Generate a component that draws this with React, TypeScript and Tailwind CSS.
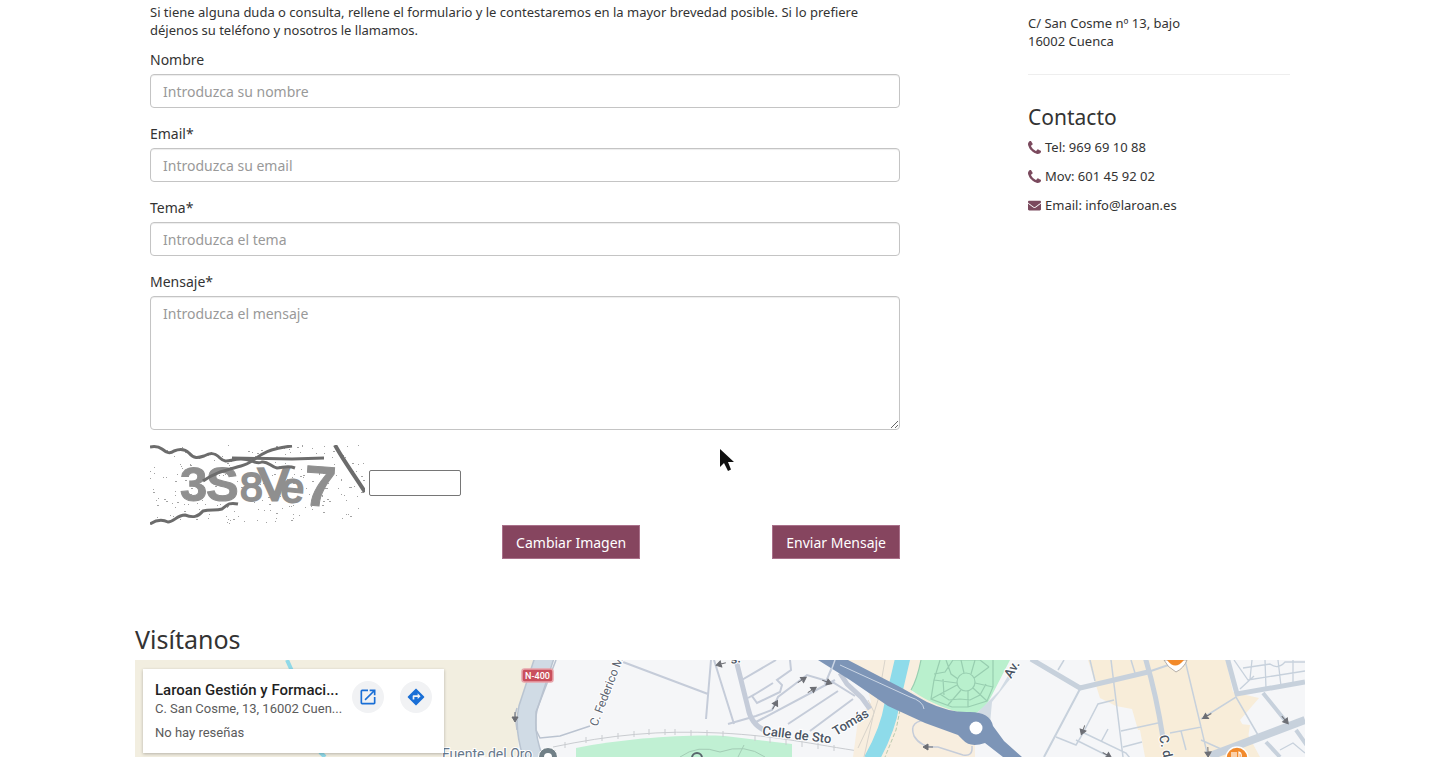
import React from "react";
import { FaEnvelope } from "react-icons/fa";

const accent = "#7b4a5e";

function PhoneIcon() {
  return (
    <svg width="13" height="13" viewBox="0 0 1408 1408" fill={accent} aria-hidden="true">
      <path d="M1408 1112q0 27-10 70.500t-21 68.500q-21 50-122 106-94 51-186 51-27 0-52.500-3.500t-57.500-12.500-47.500-14.500-55.500-20.500-49-18q-98-35-175-83-128-79-264.500-215.500t-215.500-264.500q-48-77-83-175-3-9-18-49t-20.500-55.500-14.500-47.500-12.500-57.500-3.500-52.500q0-92 51-186 56-101 106-122 25-11 68.500-21t70.500-10q14 0 21 3 18 6 53 76 11 19 30 54t35 63.500 31 53.500q3 4 17.500 25t21.500 35.500 7 28.500q0 20-28.500 50t-62 55-62 53-28.500 46q0 9 5 22.500t8.500 20.500 14 24 11.500 19q76 137 174 235t235 174q2 1 19 11.500t24 14 20.500 8.500 22.500 5q18 0 46-28.500t53-62 55-62 50-28.500q14 0 28.500 7t35.500 21.500 25 17.500q25 15 53.500 31t63.500 35 54 30q70 35 76 53 3 7 3 21z" />
    </svg>
  );
}

function Field({ id, label, placeholder, type = "text" }: { id: string; label: string; placeholder: string; type?: string }) {
  return (
    <div className="mb-[15px]">
      <label htmlFor={id} className="mb-[3px] block text-[14px] leading-[22px]">{label}</label>
      <input
        id={id}
        type={type}
        placeholder={placeholder}
        className="block h-[34px] w-full rounded border border-[#c4c4c4] bg-white px-3 text-[14px] shadow-[inset_0_1px_1px_rgba(0,0,0,0.075)] outline-none placeholder:text-[#999]"
      />
    </div>
  );
}

function captchaSpecks() {
  const specks: { x: number; y: number; w: number; h: number }[] = [];
  let seed = 71;
  const next = () => {
    seed = (seed * 16807) % 2147483647;
    return seed / 2147483647;
  };
  for (let i = 0; i < 230; i++) {
    specks.push({ x: Math.floor(next() * 214), y: Math.floor(next() * 79), w: next() > 0.7 ? 2 : 1, h: 1 });
  }
  return specks;
}

function Captcha() {
  return (
    <svg role="img" aria-label="Captcha" width="215" height="80" viewBox="0 0 215 80" className="shrink-0">
      <g fill="#a3a3a3">
        {captchaSpecks().map((s, i) => (
          <rect key={i} x={s.x} y={s.y} width={s.w} height={s.h} />
        ))}
      </g>
      <g fill="#8f8f8f" stroke="#8f8f8f" fontFamily="Liberation Sans, Arial, sans-serif" fontWeight="700">
        <text x="30" y="56" fontSize="49" strokeWidth="1">3</text>
        <text x="56" y="56" fontSize="49" strokeWidth="1">S</text>
        <text x="90" y="56" fontSize="41" strokeWidth="2" fontWeight="400">8</text>
        <text x="109" y="55" fontSize="46" strokeWidth="3" fontWeight="400" transform="rotate(-2 122 40)">V</text>
        <text x="131" y="57" fontSize="42" strokeWidth="2" fontWeight="400" transform="rotate(6 142 45)">e</text>
        <text x="154" y="61" fontSize="57" strokeWidth="1" transform="rotate(4 170 42)">7</text>
      </g>
      <g fill="none" stroke="#6c6c6c" strokeWidth="3">
        <path d="M0 2C5 1 8 1 12 4C17 8 20 9 24 6C29 4 34 3 39 8C44 14 48 13 54 11C60 8 64 7 70 13C76 19 80 14 91 14C102 14 106 20 112 17C118 16 121 22 127 23C133 23 137 20 145 23" />
        <path d="M53 36C65 27 77 25 91 21C108 17 105 5 142 1" />
        <path d="M82 13L142 14L174 13" />
        <path d="M185 0C193 15 205 31 215 47" strokeWidth="4" />
        <path d="M0 79C6 75 12 74 18 77C24 77 27 70 35 70C43 73 48 72 53 66C60 64 66 66 72 64C77 60 79 57 88 59" />
      </g>
    </svg>
  );
}

function Arrow({ x, y, r }: { x: number; y: number; r: number }) {
  return (
    <path d="M-5 0H3M0 -3L5 0L0 3Z" transform={`translate(${x} ${y}) rotate(${r})`} fill="#6d6f75" stroke="#6d6f75" strokeWidth="1" />
  );
}

function MapDrawing() {
  return (
    <svg
      role="img"
      aria-label="Mapa"
      viewBox="135 660 1170 97"
      preserveAspectRatio="xMinYMin slice"
      className="block h-[97px] w-full"
      fontFamily="Roboto, sans-serif"
    >
      <rect x="135" y="660" width="1170" height="97" fill="#f5f6f8" />
      <path d="M135 660H540L520 705L518 757H135Z" fill="#f2eee0" />
      <path d="M287 660L292 671M320 752L325 757" stroke="#90d9e8" strokeWidth="4" fill="none" />

      <path d="M576 757V748C625 738 690 734 725 736L792 744V757Z" fill="#c0f0d3" />
      <path d="M680 757Q698 744 720 752M720 752Q745 743 765 757M744 745L738 757" fill="none" stroke="#a3ccb5" strokeWidth="1" />
      <path d="M553 747C610 735 660 730 720 733S810 744 865 752" fill="none" stroke="#c9ccd0" strokeWidth="1" />
      <path d="M565 742V748M586 737V743M602 735V741M618 733V739M634 731V737M649 729V735M665 729V735M675 729V735M691 730V736M707 730V736M723 731V737M755 735V741M770 737V743M786 739V745M802 741V747M818 743V749M834 745V751" stroke="#c9ccd0" strokeWidth="1" />

      <path d="M826 660H927L912 692L975 715V757H853L858 720L871 702L868 690Z" fill="#f8eedf" />
      <path d="M885 660L878 700L873 716L858 748M868 700L874 712L864 757" fill="none" stroke="#d9d4cb" strokeWidth="1" />
      <path d="M900 710L896 730L885 757" fill="none" stroke="#b9c9ad" strokeWidth="1" strokeDasharray="4 2" />
      <path d="M903 657L892 704Q888 730 871 760" fill="none" stroke="#8edbea" strokeWidth="15" />
      <path d="M921 660Q917 680 911 690Q938 709 972 715Q986 709 992 695L1010 660Z" fill="#b9f0cd" />
      <g fill="none" stroke="#98ceb0" strokeWidth="1.200">
        <circle cx="966" cy="682" r="9" />
        <path d="M940 660L934 680L931 699L952 707H968L987 701L993 687V660M934 680L957 683M931 699L957 685M948 705L961 690M968 707L968 691M987 701L973 688M993 687L975 683M989 667L974 678M961 660L964 673M946 660L951 674L958 679M934 674L945 672L953 660H980L989 667M975 660L971 674M940 694L949 700L960 699L970 700L980 695L986 684M943 679L944 695M921 660Q917 680 911 690" />
      </g>
      <path d="M1008 676L999 691L974 716L990 724L992 702L1014 674Z" fill="#d2dbe4" />

      <g fill="#f8edd9">
        <path d="M1088 660H1226L1233 692L1259 698L1240 720L1260 757H1145L1140 730H1138L1132 709L1116 706L1100 698Z" />
        <path d="M1200 757V720L1250 725L1245 757Z" />
      </g>

      <path d="M545 656L528 708Q523 730 534 760" stroke="#b9c4d1" strokeWidth="20" fill="none" />
      <path d="M545 656L528 708Q523 730 534 760" stroke="#d0dbe5" strokeWidth="17" fill="none" />
      <path d="M556 660L536 712V730L540 738L560 736L590 726M517 708L515 715L517 730" stroke="#bac3d0" strokeWidth="1.500" fill="none" />

      <g fill="none" stroke="#c5ccd9" strokeWidth="2">
        <path d="M623 662L708 694M711 660L706 719M714 660L734 724M728 724L756 716L772 710L778 697L807 675L834 683L855 696M740 681L776 660M790 660L791 670L777 680L782 685L780 692L757 703L752 696L773 683M748 698L755 694M756 722L835 680M788 724L838 691M810 731L853 699M835 660L825 684" />
        <path d="M736 660L748 708Q751 724 764 730" strokeWidth="5" />
        <path d="M840 673L847 684L862 698L870 709" strokeWidth="5" />
        <path d="M929 720Q908 720 914 736Q921 748 938 747L963 755Q973 757 972 746" strokeWidth="1.500" />
      </g>

      <g fill="none" stroke="#c7d1dc" strokeWidth="2">
        <path d="M1031 660L1080 689L1148 672L1180 661M1080 689L1044 757" />
        <path d="M1031 659L1080 688L1148 672" strokeWidth="5" />
        <path d="M1145 657Q1156 693 1163 738" strokeWidth="5" />
        <path d="M1227 657L1237 694L1305 682" strokeWidth="5" />
        <path d="M1210 756L1305 720" strokeWidth="8" />
        <path d="M1263 693L1288 724M1296 730L1310 750M1266 742L1280 757" strokeWidth="4" />
        <path d="M1064 660L1058 670M1090 660L1095 681M1111 660L1123 757M1131 660L1135 673M1114 700L1098 704L1082 735L1076 745L1056 737M1082 732L1126 753L1133 762M1108 729L1101 742M1121 731L1158 723M1076 740L1110 757M1123 747L1142 742M1170 733L1201 727L1208 757M1185 660L1201 727M1201 719L1236 697L1258 735M1201 740L1230 753M1181 731L1186 750" strokeWidth="1.500" />
        <path d="M1234 660L1248 680L1305 671M1240 689L1254 676M1252 660L1250 679M1265 660L1266 689M1278 660L1281 686M1243 668L1270 664Q1278 670 1285 662H1305M1293 660V684M1280 750L1293 743L1305 753" strokeWidth="1.300" />
      </g>

      <path d="M818 660H848L900 687L927 702Q950 713 970 712Q990 712 993 726L1004 741L1022 757H1003L985 743Q970 748 963 740L958 735L925 723L888 706L850 680Z" fill="#7d95b7" />
      <circle cx="976" cy="728" r="6.500" fill="#fff" />
      <path d="M840 665L910 697Q923 701 924 709" fill="none" stroke="#cbd6e5" strokeWidth="1" />
      <path d="M835 660L831 671" stroke="#cbd6e5" strokeWidth="1.500" />

      <Arrow x={802} y={680} r={-32} />
      <Arrow x={827} y={682} r={20} />
      <Arrow x={812} y={690} r={-32} />
      <Arrow x={775} y={705} r={-60} />
      <Arrow x={721} y={664} r={165} />
      <Arrow x={515} y={717} r={90} />
      <Arrow x={928} y={747} r={180} />
      <Arrow x={1083} y={730} r={110} />
      <Arrow x={1107} y={755} r={30} />
      <Arrow x={1207} y={716} r={150} />
      <Arrow x={1208} y={752} r={88} />
      <Arrow x={1285} y={720} r={50} />

      <rect x="522" y="669" width="31" height="13" rx="2.500" fill="#c94f5c" stroke="#e7a4aa" strokeWidth="1.500" />
      <text x="537.500" y="679" fontSize="9" fontWeight="500" fill="#fff" textAnchor="middle">N-400</text>

      <g fill="#5e6672" stroke="#fff" strokeWidth="2" paintOrder="stroke">
        <text x="442" y="759" fontSize="14" fill="#67788c">Fuente del Oro</text>
        <text transform="translate(597 727) rotate(-69)" fontSize="12">C. Federico M</text>
        <g fontSize="13" fontWeight="500" fill="#4b5563">
          <text transform="translate(762 735) rotate(7)">Calle de Sto</text>
          <text transform="translate(836 736) rotate(-31)">Tomás</text>
          <text transform="translate(1011 679) rotate(-59)">Av.</text>
          <text transform="translate(1159 736) rotate(78)">C. d</text>
          <text transform="translate(731 664) rotate(-10)">s.</text>
        </g>
      </g>

      <circle cx="548" cy="757" r="9.500" fill="#718087" stroke="#fff" />
      <circle cx="548" cy="757" r="4" fill="#fff" />
      <circle cx="697" cy="758" r="5" fill="none" stroke="#58656b" strokeWidth="2" />
      <path d="M1164 660Q1167 667 1176 672Q1184 668 1187 660Z" fill="#fff" stroke="#a29b93" strokeWidth="0.800" />
      <path d="M1167 660Q1175 671 1184 660Z" fill="#f28a2b" />
      <circle cx="1237" cy="758" r="11" fill="#f28a2b" stroke="#fff" strokeWidth="1.500" />
      <path d="M1232 752V757M1234 752V757M1236 752V757M1239 757V752Q1242 753 1241 757" stroke="#fff" strokeWidth="1.200" fill="none" />
    </svg>
  );
}

function MapCard() {
  return (
    <div className="absolute left-2 top-[9px] flex h-[84px] w-[301px] justify-between bg-white px-3 pt-3 font-[Roboto,sans-serif] shadow-[0_1px_3px_rgba(0,0,0,0.25)]">
      <div className="min-w-0 whitespace-nowrap">
        <div className="text-[15px] font-medium leading-[18px] text-[#1f1f1f]">Laroan Gestión y Formaci...</div>
        <div className="text-[13px] leading-5 text-[#5b5b5b]">C. San Cosme, 13, 16002 Cuen...</div>
        <div className="mt-1 text-[13px] leading-5 text-[#5b5b5b]">No hay reseñas</div>
      </div>
      <div className="flex gap-4">
        <a href="#mapa" aria-label="Abrir en Maps" className="flex size-8 items-center justify-center rounded-full bg-[#f1f2f4]">
          <svg width="20" height="20" viewBox="0 0 24 24" fill="#1a6fd6">
            <path d="M19 19H5V5h7V3H5a2 2 0 0 0-2 2v14a2 2 0 0 0 2 2h14c1.100 0 2-.9 2-2v-7h-2v7zM14 3v2h3.590l-9.830 9.830 1.410 1.410L19 6.410V10h2V3h-7z" />
          </svg>
        </a>
        <a href="#ruta" aria-label="Cómo llegar" className="flex size-8 items-center justify-center rounded-full bg-[#f1f2f4]">
          <svg width="20" height="20" viewBox="0 0 24 24" fill="#1a6fd6">
            <path d="M21.710 11.290l-9-9a1 1 0 0 0-1.410 0l-9 9a1 1 0 0 0 0 1.410l9 9a1 1 0 0 0 1.410 0l9-9a1 1 0 0 0 0-1.410zM14 14.500V12h-4v3H8v-4c0-.55.45-1 1-1h5V7.500l3.500 3.500-3.500 3.500z" />
          </svg>
        </a>
      </div>
    </div>
  );
}

export default function App() {
  return (
    <div className="relative overflow-hidden bg-white font-['Noto_Sans',sans-serif] text-[#333]">
      <main className="mx-auto max-w-[1170px]">
        <div className="flex px-[15px] pt-[3px]">
          <form className="w-[750px] shrink" onSubmit={(e) => e.preventDefault()}>
            <p className="mb-[10px] text-[13px] leading-[18px]">
              Si tiene alguna duda o consulta, rellene el formulario y le contestaremos en la mayor brevedad posible. Si lo prefiere déjenos su teléfono y nosotros le llamamos.
            </p>
            <Field id="nombre" label="Nombre" placeholder="Introduzca su nombre" />
            <Field id="email" label="Email*" placeholder="Introduzca su email" type="email" />
            <Field id="tema" label="Tema*" placeholder="Introduzca el tema" />
            <div className="mb-[15px]">
              <label htmlFor="mensaje" className="mb-[3px] block text-[14px] leading-[22px]">Mensaje*</label>
              <textarea
                id="mensaje"
                placeholder="Introduzca el mensaje"
                className="block h-[134px] w-full resize-y rounded border border-[#c4c4c4] px-3 py-[7px] text-[14px] leading-5 shadow-[inset_0_1px_1px_rgba(0,0,0,0.075)] outline-none placeholder:text-[#999]"
              />
            </div>
            <div className="flex items-center gap-1">
              <Captcha />
              <input aria-label="Código de la imagen" className="mt-[-5px] h-[26px] w-[92px] rounded-xs border border-[#767676] px-1 text-[13px]" />
            </div>
            <div className="flex justify-end gap-[132px]">
              <button type="button" className="h-[34px] border border-[#a9708a] bg-[#86455f] px-[13px] text-[14px] text-white">Cambiar Imagen</button>
              <button type="submit" className="h-[34px] border border-[#a9708a] bg-[#86455f] px-[13px] text-[14px] text-white">Enviar Mensaje</button>
            </div>
          </form>

          <aside className="ml-auto w-[262px] pt-[11px] text-[13px]">
            <address className="not-italic leading-[18px]">
              C/ San Cosme nº 13, bajo
              <br />
              16002 Cuenca
            </address>
            <hr className="mt-6 border-[#eee]" />
            <h3 className="mt-[30px] text-[21px] leading-6">Contacto</h3>
            <ul className="mt-1 leading-[29px]">
              <li className="flex items-center gap-1"><PhoneIcon />Tel: 969 69 10 88</li>
              <li className="flex items-center gap-1"><PhoneIcon />Mov: 601 45 92 02</li>
              <li className="flex items-center gap-1"><FaEnvelope size={13} color={accent} />Email: info@laroan.es</li>
            </ul>
          </aside>
        </div>

        <section className="mt-[66px]">
          <h2 className="text-[25px] leading-[28px]">Visítanos</h2>
          <div className="relative mt-[7px]">
            <MapDrawing />
            <MapCard />
          </div>
        </section>
      </main>

      <svg className="absolute left-[719px] top-[448px]" width="16" height="25" viewBox="0 0 16 25" aria-hidden="true">
        <path d="M1 1V19L5 15L9 23L12 21.500L9 14H15Z" fill="#111" />
      </svg>
    </div>
  );
}
